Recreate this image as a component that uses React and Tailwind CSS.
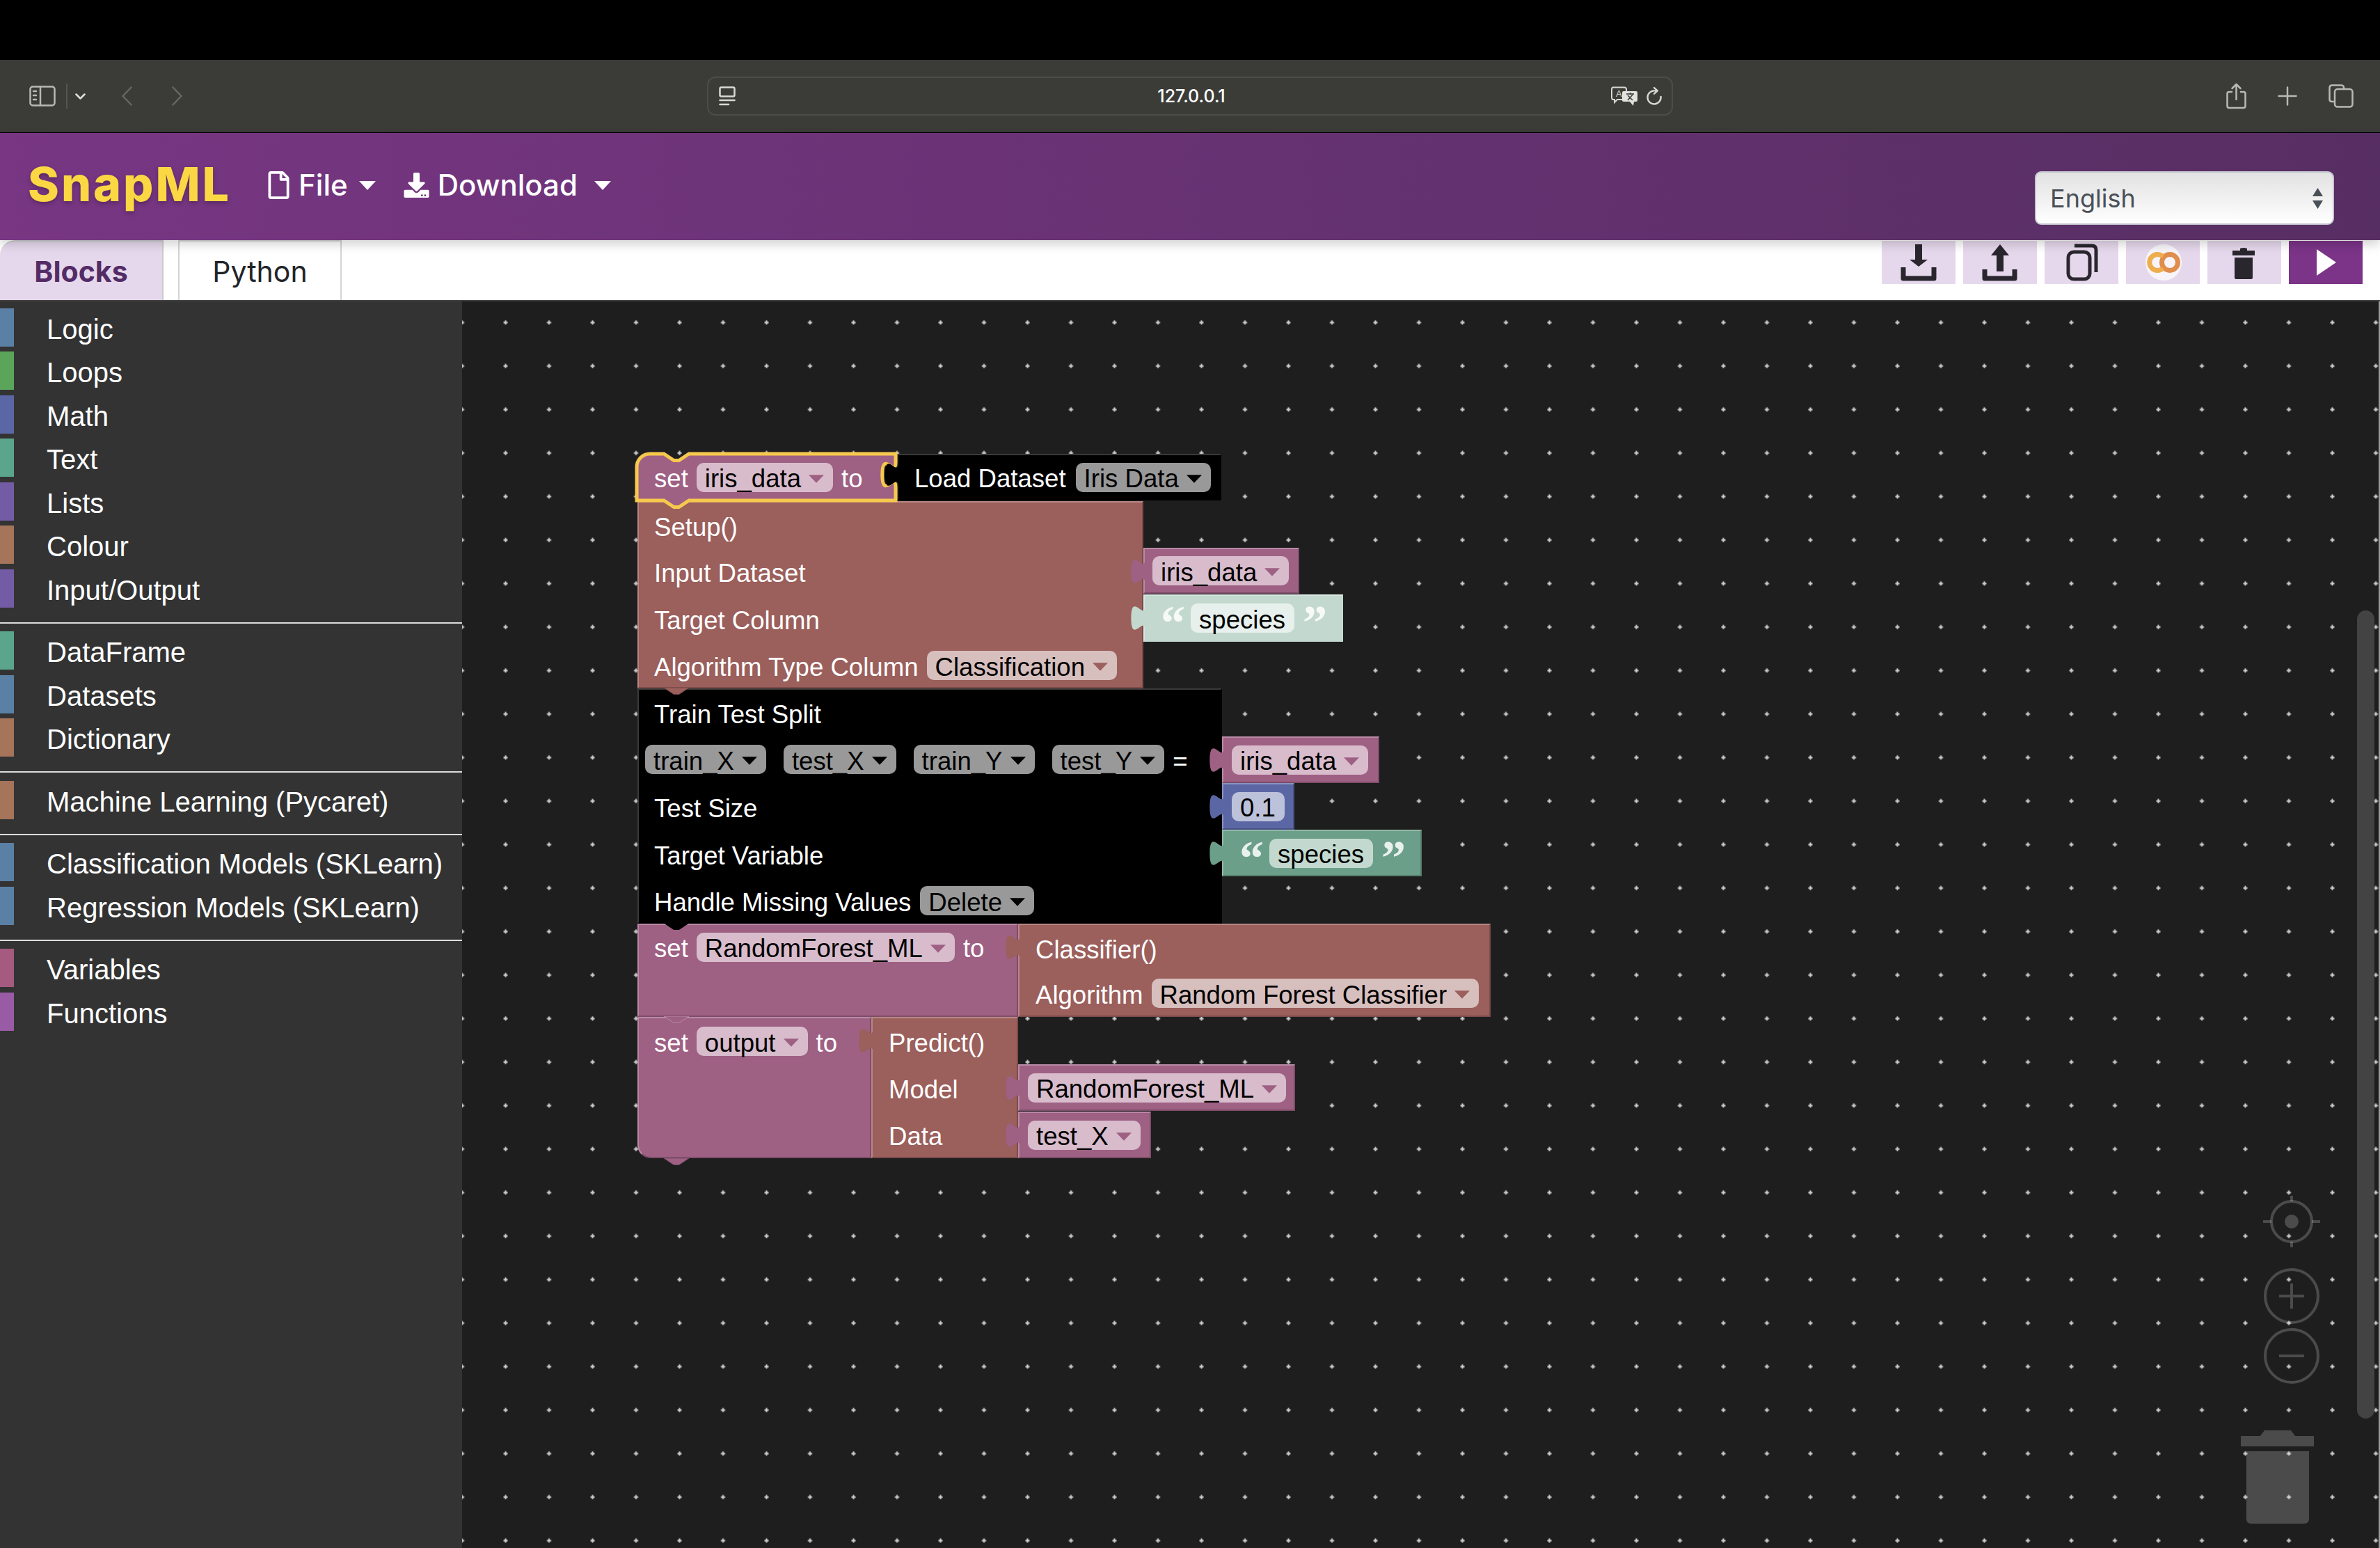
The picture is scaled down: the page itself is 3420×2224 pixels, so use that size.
import { Children } from 'react';
import { FaRegFile, FaDownload } from 'react-icons/fa';

// Toolbox categories, grouped by the separators between them
const TOOLBOX = [
  [
    { label: 'Logic', swatch: 'bg-[#5b80a5]' },
    { label: 'Loops', swatch: 'bg-[#5ba55b]' },
    { label: 'Math', swatch: 'bg-[#5b67a5]' },
    { label: 'Text', swatch: 'bg-[#5ba58c]' },
    { label: 'Lists', swatch: 'bg-[#745ba5]' },
    { label: 'Colour', swatch: 'bg-[#a5745b]' },
    { label: 'Input/Output', swatch: 'bg-[#745ba5]' },
  ],
  [
    { label: 'DataFrame', swatch: 'bg-[#5ba58c]' },
    { label: 'Datasets', swatch: 'bg-[#5b80a5]' },
    { label: 'Dictionary', swatch: 'bg-[#a5745b]' },
  ],
  [{ label: 'Machine Learning (Pycaret)', swatch: 'bg-[#a5745b]' }],
  [
    { label: 'Classification Models (SKLearn)', swatch: 'bg-[#5b80a5]' },
    { label: 'Regression Models (SKLearn)', swatch: 'bg-[#5b80a5]' },
  ],
  [
    { label: 'Variables', swatch: 'bg-[#a55b80]' },
    { label: 'Functions', swatch: 'bg-[#995ba5]' },
  ],
];

const VAR = { body: 'bg-[#9e6083] border-t-[#b98aa5] border-l-[#b98aa5] border-b-[#7e4d69] border-r-[#7e4d69]', field: 'bg-[#d8bccc]', arrow: '#9e6083', fill: '#9e6083' };
const ML = { body: 'bg-[#9b5f5c] border-t-[#b88784] border-l-[#b88784] border-b-[#7c4c4a] border-r-[#7c4c4a]', field: 'bg-[#d7bfbe]', arrow: '#9b5f5c', fill: '#9b5f5c' };
const DARK = { body: 'bg-black border-t-[#3a3a3a] border-l-[#3a3a3a] border-b-black border-r-black', field: 'bg-[#999999]', arrow: '#000000', fill: '#000000' };
const MATH = { body: 'bg-[#5b67a5] border-t-[#8a93bf] border-l-[#8a93bf] border-b-[#495284] border-r-[#495284]', field: 'bg-[#bdc2db]', fill: '#5b67a5' };
const STR = { body: 'bg-[#6c9f89] border-t-[#92b8a7] border-l-[#92b8a7] border-b-[#56806e] border-r-[#56806e]', field: 'bg-[#c3d9cf]', fill: '#6c9f89' };
const STR_LIGHT = { body: 'bg-[#c3d9cf] border-t-[#d8e6df] border-l-[#d8e6df] border-b-[#c3d9cf] border-r-[#c3d9cf]', field: 'bg-[#e7f0ec]', fill: '#c3d9cf' };

// Helvetica sits a little lower in the box than Liberation Sans does
const lowered = (children) =>
  Children.map(children, (c) => (typeof c === 'string' ? <span className="pt-[6px]">{c}</span> : c));

const Field = ({ tone, children, arrow = true }) => (
  <span className={`flex items-center h-[42px] shrink-0 rounded-[10px] pl-[12px] pr-[13px] gap-[11px] text-black ${tone.field}`}>
    {lowered(children)}
    {arrow && (
      <svg viewBox="0 0 23 12" className="w-[22px] h-[12px] mt-[4px]">
        <path d="M0 0H23L11.5 12Z" fill={tone.arrow} />
      </svg>
    )}
  </span>
);

const Row = ({ className = 'h-[67px]', children }) => (
  <div className={`flex items-center gap-[12px] whitespace-nowrap ${className}`}>{lowered(children)}</div>
);

// Puzzle tab on the left edge of a value block
const Tab = ({ fill }) => (
  <svg viewBox="-8 0 8 15" className="absolute left-[-21px] top-[13px] w-[21px] h-[38px]">
    <path d="M0.4 0c0,10 -8,-8 -8,7.5s8,-2.5 8,7.5z" fill={fill} />
  </svg>
);

// Statement tab hanging from the bottom of the block above
const Notch = ({ className, fill, edge }) => (
  <svg viewBox="0 0 36 10" className={`absolute w-[36px] h-[10px] ${className}`}>
    <path d="M0 0L14.4 9.6H21.6L36 0Z" fill={fill} stroke={edge} strokeWidth="1" />
  </svg>
);

const Block = ({ tone, className, children, tab }) => (
  <div className={`absolute box-border border-t-2 border-b-2 border-l-2 border-r-2 text-white ${tone.body} ${className}`}>
    {tab && <Tab fill={tone.fill} />}
    {children}
  </div>
);

const Quote = ({ children }) => (
  <span className="h-[42px] w-[31px] text-[70px] leading-[56px] font-bold text-white/85 font-['Liberation_Serif',serif]">{children}</span>
);

const ChromeIcon = ({ className, children, viewBox }) => (
  <svg viewBox={viewBox} className={className} fill="none" stroke="currentColor" strokeWidth="2.5" strokeLinecap="round" strokeLinejoin="round">
    {children}
  </svg>
);

const ToolButton = ({ className = 'bg-[#e6d8ec]', children }) => (
  <div className={`w-[106px] h-[62px] ${className}`}>
    <svg viewBox="0 0 106 62" className="w-full h-full">{children}</svg>
  </div>
);

const BrowserBar = () => (
  <div className="flex items-center h-[104px] shrink-0 bg-[#3b3c37] pl-[42px] pr-[38px] text-[#b8b8b4]">
    <ChromeIcon viewBox="0 0 38 30" className="w-[38px] h-[30px]">
      <rect x="1.5" y="1.5" width="35" height="27" rx="3.5" />
      <path d="M16 2V28M6 8H10M6 14H10M6 20H10" />
    </ChromeIcon>
    <div className="w-[2px] h-[36px] bg-[#55564f] ml-[15px]" />
    <ChromeIcon viewBox="0 0 15 9" className="w-[15px] h-[9px] ml-[11px] text-[#e0e0dc]">
      <path d="M1.5 1.5L7.5 7.5L13.5 1.5" />
    </ChromeIcon>
    <ChromeIcon viewBox="0 0 15 28" className="w-[15px] h-[28px] ml-[52px] text-[#666762]">
      <path d="M13.5 1.5L1.5 14L13.5 26.5" />
    </ChromeIcon>
    <ChromeIcon viewBox="0 0 15 28" className="w-[15px] h-[28px] ml-[57px] text-[#666762]">
      <path d="M1.5 1.5L13.5 14L1.5 26.5" />
    </ChromeIcon>

    <div className="flex items-center justify-between w-[1388px] h-[56px] ml-[754px] rounded-[12px] border-2 border-[#4c4d47] pl-[15px] pr-[13px]">
      <ChromeIcon viewBox="0 0 24 28" className="w-[24px] h-[28px] text-[#d8d8d4]">
        <rect x="1.5" y="1.5" width="21" height="13" rx="2" />
        <path d="M1.5 20H22.5M1.5 26H14" />
      </ChromeIcon>
      <span className="pl-[52px] text-[25px] leading-none text-white font-['Inter',sans-serif] font-medium">127.0.0.1</span>
      <div className="flex items-center gap-[12px]">
        <svg viewBox="0 0 39 28" className="w-[39px] h-[28px]">
          <path d="M3 1.5H19Q22 1.5 22 4.5V16Q22 19 19 19H9L5 23V19H3Q1 19 1 16V4.5Q1 1.5 3 1.5Z" fill="none" stroke="#d8d8d4" strokeWidth="2" />
          <text x="7" y="15" fontSize="13" fill="#d8d8d4" fontFamily="Liberation Sans">A</text>
          <path d="M18 7H36Q38 7 38 9V20Q38 22 36 22H33L32 28L27 22H18Q16 22 16 20V9Q16 7 18 7Z" fill="#e2e2de" />
          <path d="M22 11H33M27.5 9V12M24 20L31 12M31 20L24 13" stroke="#3b3c37" strokeWidth="1.6" fill="none" />
        </svg>
        <ChromeIcon viewBox="0 0 24 28" className="w-[23px] h-[28px] text-[#d8d8d4]">
          <path d="M21.5 15A10 10 0 1 1 11.5 6H16M11.5 1.5L16.5 6L11.5 10.5" />
        </ChromeIcon>
      </div>
    </div>

    <div className="flex items-center ml-auto gap-[45px]">
      <ChromeIcon viewBox="0 0 29 38" className="w-[29px] h-[38px]">
        <path d="M8 13H4Q1.5 13 1.5 15.5V33Q1.5 36 4 36H25Q27.5 36 27.5 33V15.5Q27.5 13 25 13H21M14.5 24V2M8.5 8L14.5 2L20.5 8" />
      </ChromeIcon>
      <ChromeIcon viewBox="0 0 28 28" className="w-[28px] h-[28px]">
        <path d="M14 1.5V26.5M1.5 14H26.5" />
      </ChromeIcon>
      <ChromeIcon viewBox="0 0 36 34" className="w-[36px] h-[34px]">
        <path d="M7 25H5Q1.5 25 1.5 21.5V5Q1.5 1.5 5 1.5H18Q22 1.5 22 5V7" />
        <rect x="9" y="7" width="25.5" height="25.5" rx="4" />
      </ChromeIcon>
    </div>
  </div>
);

const Header = () => (
  <div className="relative z-10 flex items-center h-[154px] shrink-0 pl-[40px] pr-[66px] mt-[1px] bg-linear-to-r from-[#783683] to-[#572e63] shadow-[0_6px_14px_rgba(0,0,0,0.18)] font-['Inter',sans-serif]">
    <span className="text-[68px] leading-none font-extrabold tracking-[3px] text-[#fbd843] [text-shadow:0_3px_6px_rgba(0,0,0,0.25)] mb-[8px]">SnapML</span>
    <div className="flex items-center gap-[12px] ml-[52px] mb-[4px] text-[42px] leading-none font-medium text-white">
      <FaRegFile className="w-[33px] h-[40px]" />
      <span>File</span>
      <svg viewBox="0 0 24 13" className="w-[24px] h-[13px] ml-[4px]"><path d="M0 0H24L12 13Z" fill="#fff" /></svg>
      <FaDownload className="w-[37px] h-[36px] ml-[28px]" />
      <span>Download</span>
      <svg viewBox="0 0 24 13" className="w-[24px] h-[13px] ml-[12px]"><path d="M0 0H24L12 13Z" fill="#fff" /></svg>
    </div>
    <div className="flex items-center justify-between ml-auto mt-[33px] w-[430px] h-[77px] box-border rounded-[9px] border-2 border-[#c5c6cf] bg-linear-to-b from-[#e2e2e2] to-[#ffffff] pl-[20px] pr-[14px] text-[36px] text-[#495057]">
      <span>English</span>
      <svg viewBox="0 0 15 30" className="w-[15px] h-[30px]"><path d="M7.5 0L15 12H0ZM0 18H15L7.5 30Z" fill="#495057" /></svg>
    </div>
  </div>
);

const TabBar = () => (
  <div className="flex h-[88px] shrink-0 bg-white border-b-2 border-[#444] font-['Inter',sans-serif]">
    <div className="flex items-center justify-center w-[235px] h-[86px] pt-[3px] rounded-tl-[22px] border-t-2 border-r-2 border-[#cccccc] bg-[#e6d8ec] text-[41px] font-bold text-[#532c66]">Blocks</div>
    <div className="flex items-center justify-center w-[235px] h-[86px] pt-[3px] ml-[21px] border-t-2 border-l-2 border-r-2 border-[#d4d4d4] text-[41px] text-[#212529]">Python</div>
    <div className="flex gap-[11px] ml-auto pr-[25px] pt-[1px]">
      <ToolButton>
        <path d="M48 5H58V27H66L53 37L40 27H48Z" fill="#29262e" />
        <path d="M31 38V54H75V38" fill="none" stroke="#29262e" strokeWidth="7" strokeLinejoin="round" />
      </ToolButton>
      <ToolButton>
        <path d="M53 5L66 21H58V44H48V21H40Z" fill="#29262e" />
        <path d="M31 41V54H74V41" fill="none" stroke="#29262e" strokeWidth="7" strokeLinejoin="round" />
      </ToolButton>
      <ToolButton>
        <rect x="34" y="16" width="31" height="39" rx="8" fill="none" stroke="#29262e" strokeWidth="5" />
        <path d="M43 7H68Q74 7 74 13V45" fill="none" stroke="#29262e" strokeWidth="5" />
      </ToolButton>
      <ToolButton>
        <ellipse cx="54" cy="31" rx="26" ry="26" fill="#f8f5fa" />
        <circle cx="63" cy="31" r="11.5" fill="none" stroke="#e08d4d" strokeWidth="7" />
        <path d="M53 22.5A11.5 11.5 0 1 0 53 39.5" fill="none" stroke="#efae4e" strokeWidth="7" />
      </ToolButton>
      <ToolButton>
        <path d="M36 14H47V11Q52 9 57 11V14H68V21H36ZM39 24H65V53Q65 55 63 55H41Q39 55 39 53Z" fill="#29262e" />
      </ToolButton>
      <ToolButton className="bg-[#7b3488]">
        <path d="M40 12L68 31L40 50Z" fill="#fff" />
      </ToolButton>
    </div>
  </div>
);

const Sidebar = () => (
  <div className="w-[664px] shrink-0 bg-[#333333] pt-[6px] text-[40px] leading-none text-white font-['Liberation_Sans',sans-serif]">
    {TOOLBOX.map((group, i) => (
      <div key={i} className={i < TOOLBOX.length - 1 ? 'border-b-2 border-[#dddddd] pb-[17px] mb-[8px]' : ''}>
        {group.map((item) => (
          <div key={item.label} className="flex items-center h-[62.5px]">
            <div className={`w-[20px] h-[55px] ${item.swatch}`} />
            <span className="pl-[47px] pt-[5px]">{item.label}</span>
          </div>
        ))}
      </div>
    ))}
  </div>
);

const Workspace = () => (
  <div className="relative flex-1 overflow-hidden bg-[#1e1e1e] border-r-2 border-[#999] text-[36.6px] leading-none font-['Liberation_Sans',sans-serif]">
    {/* dot grid */}
    <svg className="absolute inset-0 w-full h-full">
      <defs>
        <pattern id="grid" width="62.5" height="62.5" x="-3.5" y="26.8" patternUnits="userSpaceOnUse">
          <path d="M0.5 3.5H6.5M3.5 0.5V6.5" stroke="#cccccc" strokeWidth="2.2" />
        </pattern>
      </defs>
      <rect width="100%" height="100%" fill="url(#grid)" />
    </svg>

    {/* value and statement blocks */}
    <Block tone={DARK} className="left-[625px] top-[219px] w-[466px] h-[67px] pl-[23px]">
      <Row className="h-[63px] gap-[14px]">Load Dataset<Field tone={DARK}>Iris Data</Field></Row>
    </Block>

    <Block tone={ML} className="left-[252px] top-[287px] w-[727px] h-[269px] pl-[22px]">
      <Row className="h-[66px]">Setup()</Row>
      <Row className="h-[67px]">Input Dataset</Row>
      <Row className="h-[68px]">Target Column</Row>
      <Row className="h-[66px]">Algorithm Type Column<Field tone={ML}>Classification</Field></Row>
    </Block>
    <Block tone={VAR} tab className="left-[979px] top-[354px] w-[224px] h-[66px] pl-[11px]">
      <Row className="h-[62px]"><Field tone={VAR}>iris_data</Field></Row>
    </Block>
    <Block tone={STR_LIGHT} tab className="left-[979px] top-[421px] w-[287px] h-[68px] pl-[23px]">
      <Row className="h-[64px]"><Quote>“</Quote><Field tone={STR_LIGHT} arrow={false}>species</Field><Quote>”</Quote></Row>
    </Block>

    <Block tone={DARK} className="left-[252px] top-[556px] w-[840px] h-[338px] pl-[9px]">
      <Row className="h-[66px] pl-[13px]">Train Test Split</Row>
      <div className="flex items-center gap-[25px] h-[68px] whitespace-nowrap">
        <Field tone={DARK}>train_X</Field>
        <Field tone={DARK}>test_X</Field>
        <Field tone={DARK}>train_Y</Field>
        <Field tone={DARK}>test_Y</Field>
        <span className="ml-[-13px] pt-[6px]">=</span>
      </div>
      <Row className="h-[68px] pl-[13px]">Test Size</Row>
      <Row className="h-[68px] pl-[13px]">Target Variable</Row>
      <Row className="h-[66px] pl-[13px] gap-[13px]">Handle Missing Values<Field tone={DARK}>Delete</Field></Row>
    </Block>
    <Block tone={VAR} tab className="left-[1092px] top-[625px] w-[226px] h-[67px] pl-[12px]">
      <Row className="h-[63px]"><Field tone={VAR}>iris_data</Field></Row>
    </Block>
    <Block tone={MATH} tab className="left-[1092px] top-[692px] w-[104px] h-[67px] pl-[12px]">
      <Row className="h-[63px]"><Field tone={MATH} arrow={false}>0.1</Field></Row>
    </Block>
    <Block tone={STR} tab className="left-[1092px] top-[759px] w-[287px] h-[67px] pl-[23px]">
      <Row className="h-[63px]"><Quote>“</Quote><Field tone={STR} arrow={false}>species</Field><Quote>”</Quote></Row>
    </Block>

    <Block tone={VAR} className="left-[252px] top-[894px] w-[547px] h-[134px] pl-[22px]">
      <Row className="h-[63px]">set<Field tone={VAR}>RandomForest_ML</Field>to</Row>
    </Block>
    <Block tone={ML} tab className="left-[799px] top-[894px] w-[679px] h-[134px] pl-[23px]">
      <Row className="h-[66px]">Classifier()</Row>
      <Row className="h-[64px] gap-[12px]">Algorithm<Field tone={ML}>Random Forest Classifier</Field></Row>
    </Block>

    <Block tone={VAR} className="left-[252px] top-[1028px] w-[336px] h-[203px] pl-[22px] rounded-bl-[19px]">
      <Row className="h-[66px]">set<Field tone={VAR}>output</Field>to</Row>
    </Block>
    <Block tone={ML} tab className="left-[588px] top-[1028px] w-[211px] h-[203px] pl-[23px]">
      <Row className="h-[66px]">Predict()</Row>
      <Row className="h-[68px]">Model</Row>
      <Row className="h-[66px]">Data</Row>
    </Block>
    <Block tone={VAR} tab className="left-[799px] top-[1096px] w-[398px] h-[67px] pl-[12px]">
      <Row className="h-[63px]"><Field tone={VAR}>RandomForest_ML</Field></Row>
    </Block>
    <Block tone={VAR} tab className="left-[799px] top-[1164px] w-[191px] h-[67px] pl-[12px]">
      <Row className="h-[63px]"><Field tone={VAR}>test_X</Field></Row>
    </Block>

    {/* tabs joining stacked statements */}
    <Notch className="left-[290px] top-[555px]" fill="#9b5f5c" edge="#7c4c4a" />
    <Notch className="left-[290px] top-[893px]" fill="#000000" edge="#000000" />
    <Notch className="left-[290px] top-[1027px]" fill="#9e6083" edge="#b98aa5" />
    <Notch className="left-[290px] top-[1231px]" fill="#9e6083" edge="#7e4d69" />

    {/* selected block with its highlight */}
    <svg viewBox="900 640 400 95" className="absolute left-[236px] top-[207px] w-[400px] h-[95px]">
      <path
        d="M915 671a19 19 0 0 1 19 -19H954l14.4 9.6h7.2l14.4 -9.6H1287V664c0 24 -19.2 -19.2 -19.2 18s19.2 -6 19.2 18V719H990l-14.4 9.6h-7.2l-14.4 -9.6H915Z"
        fill="#9e6083"
        stroke="#f6c94e"
        strokeWidth="5"
      />
      <path d="M1291 664c0 24 -19.2 -19.2 -19.2 18s19.2 -6 19.2 18Z" fill="#000000" />
    </svg>
    <div className="absolute left-[252px] top-[219px] h-[67px] pl-[24px] text-white">
      <Row>set<Field tone={VAR}>iris_data</Field>to</Row>
    </div>

    {/* zoom controls */}
    <svg viewBox="0 0 82 290" className="absolute left-[2588px] top-[1285px] w-[82px] h-[290px]" fill="none" stroke="#ffffff" strokeOpacity="0.2" strokeWidth="4">
      <circle cx="41" cy="37" r="29" />
      <path d="M41 0V8M41 66V74M0 37H12M70 37H82" />
      <circle cx="41" cy="37" r="10" fill="#ffffff" fillOpacity="0.2" stroke="none" />
      <circle cx="41" cy="144" r="38" />
      <path d="M41 126V162M23 144H59" />
      <circle cx="41" cy="230" r="38" />
      <path d="M23 230H59" />
    </svg>

    {/* trash can */}
    <svg viewBox="0 0 105 134" className="absolute left-[2556px] top-[1622px] w-[105px] h-[134px]" fill="#ffffff" fillOpacity="0.2">
      <path d="M0 8H28L34 0H72L78 8H105V23H0Z" />
      <path d="M8 30H98V127Q98 134 91 134H15Q8 134 8 127Z" />
    </svg>

    {/* workspace scrollbar */}
    <div className="absolute left-[2723px] top-[444px] w-[25px] h-[1161px] rounded-full bg-[#434343]" />
  </div>
);

export default function App() {
  return (
    <div className="flex flex-col w-[3420px] h-[2224px] overflow-hidden bg-black">
      <div className="h-[86px] shrink-0" />
      <BrowserBar />
      <Header />
      <TabBar />
      <div className="flex flex-1 min-h-0">
        <Sidebar />
        <Workspace />
      </div>
    </div>
  );
}
